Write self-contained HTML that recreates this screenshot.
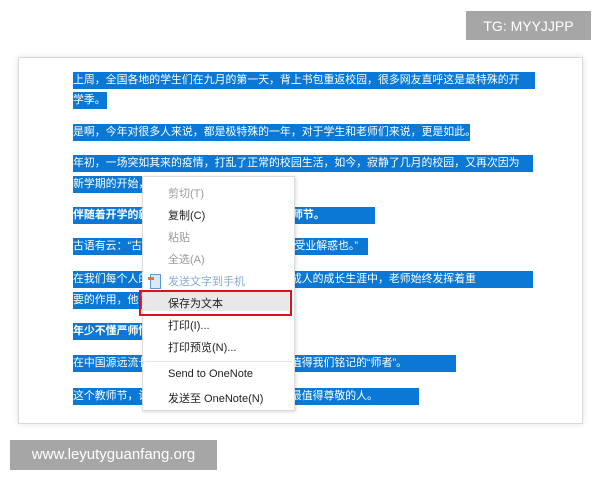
<!DOCTYPE html>
<html><head><meta charset="utf-8"><style>
body{margin:0;width:600px;height:480px;background:#fff;position:relative;overflow:hidden;font-family:"Liberation Sans","Noto Sans CJK SC",sans-serif}
.frame{position:absolute;left:18px;top:57px;width:563px;height:365px;border:1px solid #d8d8d8;box-shadow:0 0 6px rgba(0,0,0,.12);background:#fff}
.l{position:absolute;left:73px;height:17px;line-height:17px;background:#0a78d4;color:#fff;font-size:10.9px;white-space:nowrap;overflow:hidden}
.b{font-weight:bold}
.menu{position:absolute;left:142px;top:176px;width:151px;height:233px;background:#fff;border:1px solid #dcdcdc;box-shadow:1px 1px 3px rgba(0,0,0,.15);font-size:11px;color:#222}
.mi{position:absolute;left:25px;white-space:nowrap}
.g{color:#9a9a9a}
.sep{position:absolute;left:2px;right:2px;top:184px;height:1px;background:#e4e4e4}
.red{position:absolute;left:139px;top:290px;width:149px;height:22px;border:2px solid #d9141b;box-sizing:content-box}
.hl{position:absolute;left:0;top:114px;width:146px;height:20px;background:#e8e8e8}
.badge{position:absolute;background:#a6a6a6;color:#fff;font-size:14px;line-height:30px;text-align:center}
</style></head><body>
<div class="badge" style="left:466px;top:11px;width:125px;height:29px">TG: MYYJJPP</div>
<div class="frame"></div>
<div class="l" style="top:72px;width:462px">上周，全国各地的学生们在九月的第一天，背上书包重返校园，很多网友直呼这是最特殊的开</div>
<div class="l" style="top:92px;width:34px">学季。</div>
<div class="l" style="top:124px;width:397px">是啊，今年对很多人来说，都是极特殊的一年，对于学生和老师们来说，更是如此。</div>
<div class="l" style="top:155px;width:460px">年初，一场突如其来的疫情，打乱了正常的校园生活，如今，寂静了几月的校园，又再次因为</div>
<div class="l" style="top:176px;width:80px">新学期的开始，</div>
<div class="l b" style="top:207px;width:302px">伴随着开学的新学期，我们也迎来了第36个教师节。</div>
<div class="l" style="top:238px;width:295px">古语有云：“古之学者必有师。师者，所以传道受业解惑也。”</div>
<div class="l" style="top:271px;width:460px">在我们每个人的人生当中，从呱呱坠地到长大成人的成长生涯中，老师始终发挥着重</div>
<div class="l" style="top:292px;width:80px">要的作用，他们</div>
<div class="l b" style="top:323px;width:80px">年少不懂严师情</div>
<div class="l" style="top:355px;width:383px">在中国源远流长的历史中，有许多可歌可泣，值得我们铭记的“师者”。</div>
<div class="l" style="top:388px;width:346px">这个教师节，让我们一起走近他们，感恩这些最值得尊敬的人。</div>
<div class="menu">
<div class="hl"></div>
<div class="mi g" style="top:8px">剪切(T)</div>
<div class="mi" style="top:30px">复制(C)</div>
<div class="mi g" style="top:52px">粘贴</div>
<div class="mi g" style="top:74px">全选(A)</div>
<div style="position:absolute;left:7px;top:97px;width:9px;height:13px;border:1px solid #5a9bd5;background:#dbe9f7"></div>
<div style="position:absolute;left:5px;top:100px;width:6px;height:3px;background:#e8742a"></div>
<div class="mi g" style="top:96px;color:#8aa9d6">发送文字到手机</div>
<div class="mi" style="top:118px">保存为文本</div>
<div class="mi" style="top:140px">打印(I)...</div>
<div class="mi" style="top:162px">打印预览(N)...</div>
<div class="sep"></div>
<div class="mi" style="top:191px">Send to OneNote</div>
<div class="mi" style="top:213px">发送至 OneNote(N)</div>
</div>
<div class="red"></div>
<div class="badge" style="left:10px;top:440px;width:207px;height:30px;font-size:15px">www.leyutyguanfang.org</div>
</body></html>
